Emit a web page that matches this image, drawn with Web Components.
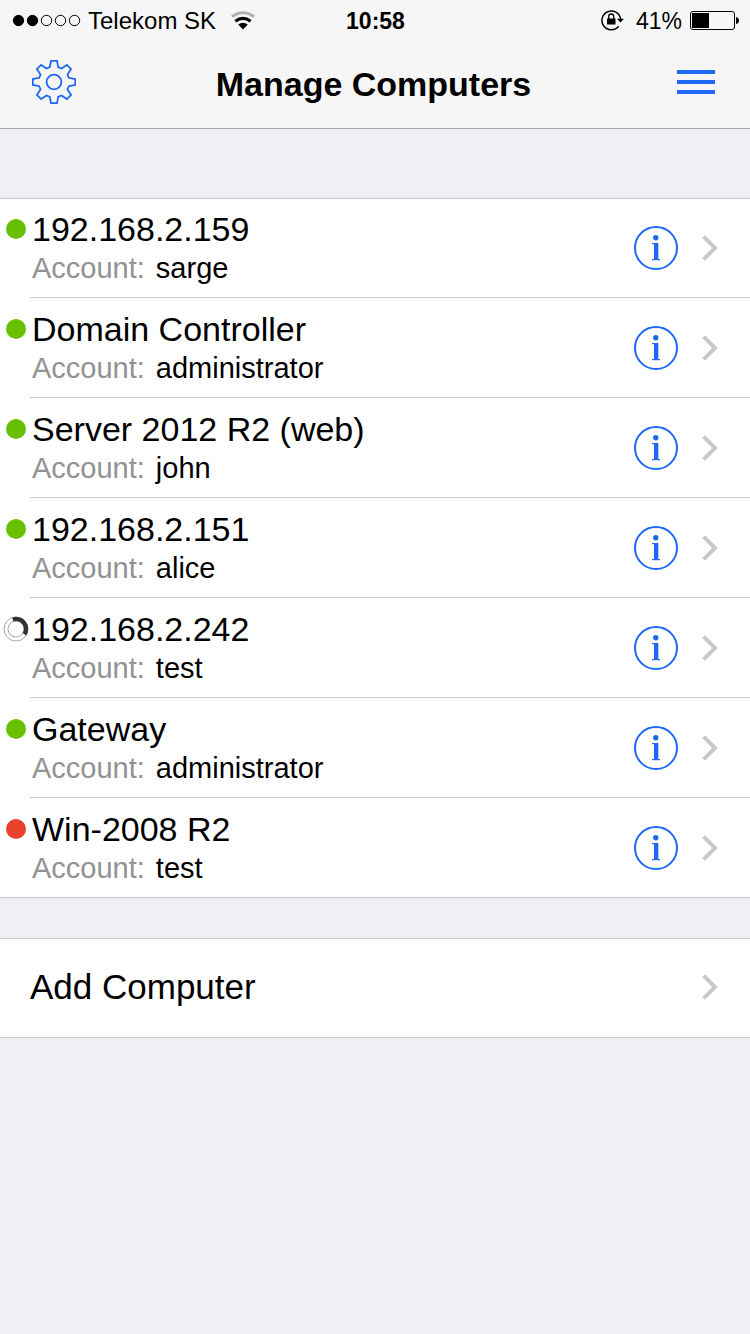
<!DOCTYPE html>
<html lang="en">
<head>
<meta charset="utf-8">
<meta name="viewport" content="width=device-width, initial-scale=1">
<title>Manage Computers</title>
<style>
  html { min-height: 100%; background: #efeff4; }
  body {
    margin: 0;
    color: #000;
    font-family: "Liberation Sans", Arial, sans-serif;
    --accent: #1f68f5;
    --line: #c8c7cc;
    --muted: #929292;
    --bar: #f6f6f6;
  }
  main { display: flex; flex-direction: column; gap: 40px; padding-top: 69px; }
</style>
</head>
<body>
  <app-header>
    <status-bar carrier="Telekom SK" time="10:58" battery="41" signal="2"></status-bar>
    <nav-bar>Manage Computers</nav-bar>
  </app-header>
  <main>
    <list-group>
      <computer-row status="online" account="sarge">192.168.2.159</computer-row>
      <computer-row status="online" account="administrator">Domain Controller</computer-row>
      <computer-row status="online" account="john">Server 2012 R2 (web)</computer-row>
      <computer-row status="online" account="alice">192.168.2.151</computer-row>
      <computer-row status="checking" account="test">192.168.2.242</computer-row>
      <computer-row status="online" account="administrator">Gateway</computer-row>
      <computer-row status="offline" account="test">Win-2008 R2</computer-row>
    </list-group>
    <list-group>
      <action-row>Add Computer</action-row>
    </list-group>
  </main>

<script>
  class BaseElement extends HTMLElement {
    connectedCallback() {
      if (this.shadowRoot) return;
      this.attachShadow({ mode: "open" }).innerHTML = this.render();
    }
  }

  class AppHeader extends BaseElement {
    render() {
      return `
        <style>
          :host { display: block; background: var(--bar); border-bottom: 1px solid #a7a7ab; }
        </style>
        <slot></slot>`;
    }
  }

  class StatusBar extends BaseElement {
    render() {
      const level = Number(this.getAttribute("battery"));
      const signal = Number(this.getAttribute("signal"));
      const dots = [0, 1, 2, 3, 4].map(i =>
        `<circle cx="${6.5 + i * 14}" cy="6.5" r="5.2" fill="${i < signal ? "#000" : "none"}" stroke="#000" stroke-width="1"/>`).join("");
      return `
        <style>
          :host {
            display: grid; grid-template-columns: 1fr auto 1fr; align-items: center;
            box-sizing: border-box; height: 40px; padding: 0 11px 0 12px;
            font-size: 24px; line-height: 28px;
          }
          div { display: flex; align-items: center; }
          .left { gap: 15px; }
          .carrier { gap: 8px; }
          .right { justify-content: flex-end; gap: 8px; }
          .charge { gap: 12px; font-size: 23px; }
          time { font-weight: bold; font-size: 23px; }
          span, time { padding-top: 2px; }
          svg { display: block; }
        </style>
        <div class="left">
          <div class="carrier">
            <svg width="68" height="12" viewBox="0 0 68 12" overflow="visible" role="img" aria-label="Signal">${dots}</svg>
            <span>${this.getAttribute("carrier")}</span>
          </div>
          <svg width="24" height="20" viewBox="0 -1 24 20" fill="none" role="img" aria-label="Wi-Fi">
            <path d="M.8 5.600Q12-2.400 23.200 5.600" stroke="#b0b0b0" stroke-width="2.800"/>
            <path d="M4.400 10.200Q12 4.600 19.600 10.200" stroke="#000" stroke-width="3.200"/>
            <path d="M7.200 13.600Q12 9.900 16.800 13.600L12 18.400Z" fill="#000"/>
          </svg>
        </div>
        <time>${this.getAttribute("time")}</time>
        <div class="right">
          <div class="charge">
            <svg width="24" height="22" viewBox="0 0 24 22" fill="none" role="img" aria-label="Rotation lock">
              <path d="M18.600 17.300A9.400 9.400 0 1 1 20.600 9.800" stroke="#000" stroke-width="1.500"/>
              <path d="M17 9.800H24L20.500 13.600Z" fill="#000"/>
              <rect x="7" y="9.500" width="8.500" height="6" fill="#000"/>
              <path d="M8.700 10V7.500A2.500 2.500 0 0 1 13.700 7.500V10" stroke="#000" stroke-width="1.300"/>
            </svg>
            <span>${level}%</span>
          </div>
          <svg width="49" height="19" viewBox="0 0 49 19" role="img" aria-label="Battery">
            <rect x=".5" y=".5" width="44" height="18" rx="2.500" fill="none" stroke="#000"/>
            <rect x="2" y="2" width="${Math.round(41 * level / 100)}" height="15" fill="#000"/>
            <path d="M46 6Q49 6.500 49 9.500T46 13Z" fill="#000"/>
          </svg>
        </div>`;
    }
  }

  class NavBar extends BaseElement {
    gearPath() {
      const tooth = [[-4.2, -14.8], [-3, -21.2], [3, -21.2], [4.2, -14.8]];
      const points = [];
      for (let i = 0; i < 8; i++) {
        const a = i * Math.PI / 4;
        for (const [x, y] of tooth) {
          points.push((x * Math.cos(a) - y * Math.sin(a)).toFixed(2) + " " +
                      (x * Math.sin(a) + y * Math.cos(a)).toFixed(2));
        }
      }
      return "M" + points.join("L") + "Z";
    }
    render() {
      return `
        <style>
          :host {
            display: flex; align-items: center; justify-content: space-between;
            box-sizing: border-box; height: 88px; padding: 0 35px 4px 32px;
          }
          h1 { margin: 0; padding-top: 4px; font-size: 34px; line-height: 40px; font-weight: bold; }
          button { border: 0; padding: 0; background: none; color: var(--accent); width: 44px; }
          .menu { display: flex; justify-content: flex-end; }
          svg { display: block; }
        </style>
        <button aria-label="Settings">
          <svg width="44" height="44" viewBox="-22 -22 44 44" fill="none" stroke="currentColor" stroke-width="1.800">
            <path d="${this.gearPath()}"/><circle r="7.400"/>
          </svg>
        </button>
        <h1><slot></slot></h1>
        <button class="menu" aria-label="Menu">
          <svg width="38" height="24" viewBox="0 0 38 24" fill="currentColor">
            <path d="M0 0H38V4H0ZM0 10H38V14H0ZM0 20H38V24H0Z"/>
          </svg>
        </button>`;
    }
  }

  class ListGroup extends BaseElement {
    render() {
      this.setAttribute("role", "list");
      return `
        <style>
          :host {
            display: block; background: #fff;
            box-shadow: inset 0 1px var(--line), inset 0 -1px var(--line);
          }
        </style>
        <slot></slot>`;
    }
  }

  class ChevronIcon extends BaseElement {
    render() {
      return `
        <style>:host { display: block; color: #c7c7cc; } svg { display: block; }</style>
        <svg width="16" height="26" viewBox="0 0 16 26" fill="none" stroke="currentColor" stroke-width="4" aria-hidden="true">
          <path d="M1.600 1.600L13 13L1.600 24.400"/>
        </svg>`;
    }
  }

  class StatusDot extends BaseElement {
    render() {
      const state = this.getAttribute("state");
      const color = state === "offline" ? "#e9412b" : "#67c100";
      const shape = state === "checking"
        ? `<g fill="none"><circle r="12" stroke="#909090" stroke-width=".8"/>
             <circle r="8" stroke="#909090" stroke-width=".8"/>
             <path d="M-3.200-9.500A10 10 0 0 1 8.500 5.300" stroke="#333" stroke-width="4.400"/></g>`
        : `<circle r="10" fill="${color}"/>`;
      return `
        <style>:host { display: block; } svg { display: block; }</style>
        <svg width="26" height="26" viewBox="-13 -13 26 26" role="img" aria-label="${state}">${shape}</svg>`;
    }
  }

  class ComputerRow extends BaseElement {
    render() {
      this.setAttribute("role", "listitem");
      return `
        <style>
          :host { display: flex; height: 100px; }
          status-dot { box-sizing: border-box; flex: none; width: 30px; padding: 18px 0 0 3px; }
          .body {
            flex: 1; min-width: 0; display: flex; align-items: center; gap: 24px;
            box-sizing: border-box; padding: 0 32px 0 2px; border-bottom: 1px solid var(--line);
          }
          a { flex: 1; min-width: 0; align-self: stretch; padding-top: 10px; color: inherit; text-decoration: none; }
          .name { font-size: 34px; line-height: 42px; }
          .account { display: flex; gap: 11px; font-size: 29px; line-height: 36px; }
          .label { color: var(--muted); }
          button { flex: none; border: 0; padding: 0; background: none; color: var(--accent); }
          svg { display: block; }
        </style>
        <status-dot state="${this.getAttribute("status")}"></status-dot>
        <div class="body">
          <a href="#connect">
            <div class="name"><slot></slot></div>
            <div class="account"><span class="label">Account:</span><span>${this.getAttribute("account")}</span></div>
          </a>
          <button aria-label="Details">
            <svg width="44" height="44" viewBox="0 0 44 44" fill="currentColor">
              <circle cx="22" cy="22" r="21" fill="none" stroke="currentColor" stroke-width="2"/>
              <circle cx="21.800" cy="11.700" r="2.700"/>
              <rect x="18" y="17" width="6" height="1.200"/>
              <rect x="20" y="17" width="4.300" height="17"/>
              <rect x="18" y="33" width="8" height="1.200"/>
            </svg>
          </button>
          <chevron-icon></chevron-icon>
        </div>`;
    }
  }

  class ActionRow extends BaseElement {
    render() {
      this.setAttribute("role", "listitem");
      return `
        <style>
          :host { display: block; }
          button {
            display: flex; align-items: center; justify-content: space-between;
            box-sizing: border-box; width: 100%; height: 100px; padding: 0 32px 2px 30px;
            border: 0; background: none; color: inherit; font: inherit;
            font-size: 35px; line-height: 42px; text-align: left;
          }
        </style>
        <button><span><slot></slot></span><chevron-icon></chevron-icon></button>`;
    }
  }

  customElements.define("app-header", AppHeader);
  customElements.define("status-bar", StatusBar);
  customElements.define("nav-bar", NavBar);
  customElements.define("list-group", ListGroup);
  customElements.define("chevron-icon", ChevronIcon);
  customElements.define("status-dot", StatusDot);
  customElements.define("computer-row", ComputerRow);
  customElements.define("action-row", ActionRow);
</script>
</body>
</html>
